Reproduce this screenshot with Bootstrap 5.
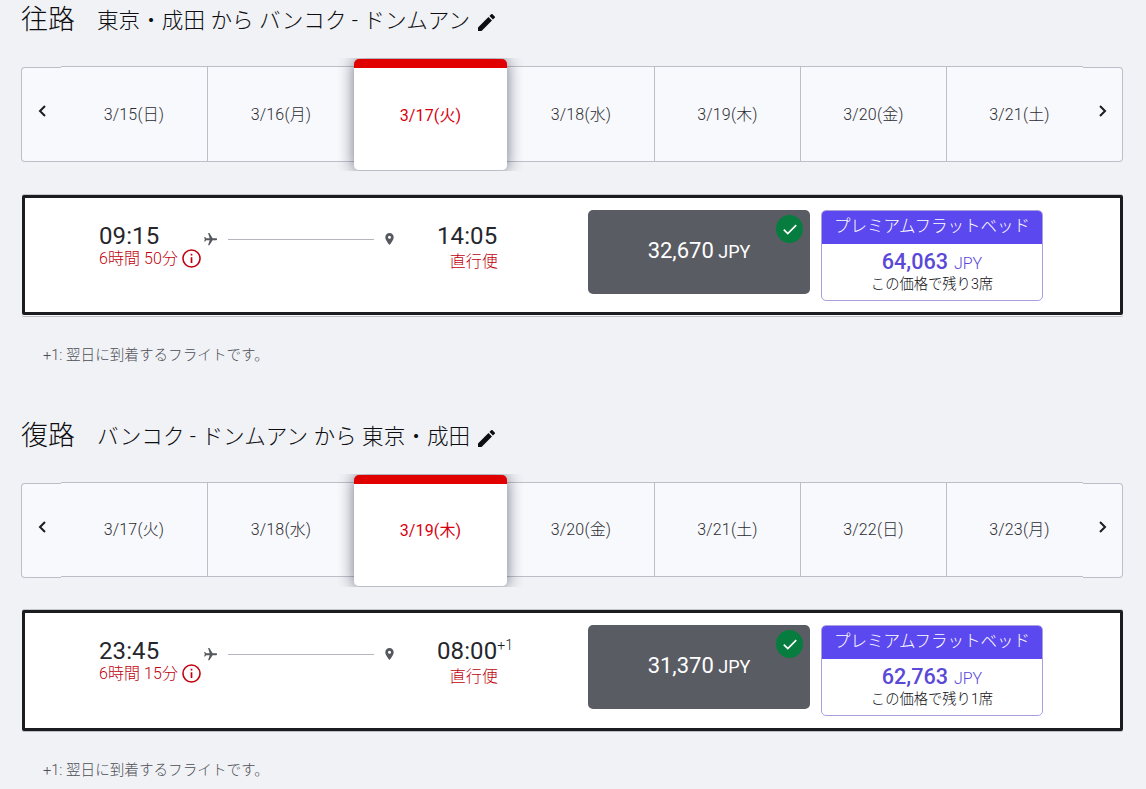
<!DOCTYPE html>
<html lang="ja">

<head>
    <meta charset="UTF-8" />
    <meta name="viewport" content="width=device-width, initial-scale=1.0" />
    <title>フライト選択</title>
    <link href="https://cdn.jsdelivr.net/npm/bootstrap@5.3.3/dist/css/bootstrap.min.css" rel="stylesheet">
    <style>
        body {
            background: #f1f2f6;
            color: #1b1c20;
            font-family: Roboto, "Noto Sans CJK JP", sans-serif;
            font-size: 16px;
            font-weight: 300;
        }

        svg { display: block; flex: none; }

        .journey { padding: 0 23px 0 21px; }
        .outbound { height: 415px; }
        .inbound { height: 374px; padding-top: 1px; }

        .journey-title { height: 40px; white-space: nowrap; color: #0d0e11; }
        .journey-title h2 { font-size: 27px; font-weight: 300; line-height: 40px; width: 76px; }
        .journey-title h3 { font-size: 21.6px; font-weight: 300; line-height: 42px; letter-spacing: .03px; }
        .journey-title svg { margin-top: 4px; }

        .date-strip { height: 112px; margin-top: 19px; color: #2b2c31; letter-spacing: .15px; }
        .date-arrow, .date-cell { background: #f8f9fd; border: 0 solid #bdbfc8; border-width: 1px 0; }
        .date-arrow { width: 40px; height: 95px; margin-bottom: 1px; padding-bottom: 8px; color: #1b1c20; }
        .date-arrow.prev { border-left-width: 1px; border-radius: 4px 0 0 4px; }
        .date-arrow.next { border-right-width: 1px; border-radius: 0 4px 4px 0; }
        .date-cell { width: 146px; height: 96px; margin-bottom: 2px; padding-top: 1px; }
        .date-cell.divided { border-right-width: 1px; }
        .date-cell.first { width: 147px; }
        .date-cell.last { width: 136px; padding-left: 9px; }
        .date-cell.wide { width: 148px; padding-left: 1px; }
        .date-cell.chosen {
            width: 153px;
            height: 112px;
            margin-bottom: 0;
            background: #fff;
            border: 0;
            border-top: 9px solid #e10000;
            border-bottom: 1px solid #bdbfc8;
            border-radius: 5px;
            color: #d8000f;
            font-weight: 400;
            padding: 0 0 7px;
            box-shadow: 0 0 16px rgba(50, 55, 70, .7);
            clip-path: inset(-1px -16px 0 -16px);
            z-index: 1;
        }

        .flight { height: 120px; margin: 24px 0 0 1px; border: 3px solid #1b1c20; border-radius: 2px; background: #fff; box-shadow: 0 -1px 0 #c6c7cd, 0 1px 0 #f8f8fa, 0 2px 0 #bdbfc8; }
        .clock { font-size: 24px; line-height: 28px; letter-spacing: .1px; }
        .clock .hour { font-weight: 400; color: #26272c; }
        .clock sup { font-size: 14px; top: -.64em; }
        .departs { width: 105px; margin-left: 74px; padding-top: 24px; }
        .duration { color: #c0000c; line-height: 17px; margin-top: -1px; white-space: nowrap; letter-spacing: .08px; }
        .route { height: 20px; margin-top: 31px; width: 190px; color: #55585f; }
        .route hr { width: 146px; margin: 0; border-color: #b4b6bd; opacity: 1; }
        .arrives { width: 100px; margin-left: 43px; padding-top: 24px; }
        .direct { width: 61px; line-height: 24px; color: #c0000c; letter-spacing: .1px; }

        .fare { width: 222px; margin-top: 12px; border-radius: 5px; white-space: nowrap; }
        .fare-basic { height: 84px; margin-left: 51px; background: #5a5c64; color: #fff; font-weight: 400; font-size: 18px; padding-bottom: 3px; }
        .fare-amount { font-size: 22px; }
        .tick { top: 5px; right: 7px; width: 27px; height: 28px; background: #067d3e; }
        .fare-premium { height: 91px; margin-left: 11px; border: 1px solid #ab9fe0; overflow: hidden; }
        .fare-premium .fare-name { height: 33px; line-height: 31px; font-size: 16.5px; background: #5b48ee; color: #fff; }
        .fare-price { color: #5a48d8; line-height: 24px; padding-top: 6px; }
        .fare-price .fare-amount { font-size: 21.6px; font-weight: 500; margin-right: 2px; }
        .fare-left { font-size: 14.3px; line-height: 17px; color: #0d0e11; }

        .footnote { margin: 29px 0 0 22px; font-size: 14.6px; line-height: 22px; color: #4c4e55; }

        .inbound .date-cell:not(.chosen) { height: 95px; margin-bottom: 3px; padding-top: 0; }
        .inbound .date-cell.chosen { padding-bottom: 9px; }
        .inbound .flight { height: 121px; margin-top: 23px; box-shadow: 0 -1px 0 #c6c7cd, 0 1px 0 #bdbfc8; }
        .inbound .footnote { margin-top: 28px; }
    </style>
</head>

<body>

    <!-- アイコン -->
    <svg class="d-none">
        <symbol id="pencil" viewBox="3 3 18 18">
            <path fill="currentColor" d="M3 17.25V21h3.75L17.8 9.94l-3.75-3.75L3 17.25zM20.7 7.04a1 1 0 0 0 0-1.41l-2.34-2.34a1 1 0 0 0-1.41 0l-1.83 1.83 3.75 3.75 1.83-1.83z" />
        </symbol>
        <symbol id="left" viewBox="0 0 8 12">
            <path fill="none" stroke="currentColor" stroke-width="2" d="M7 1L2 6l5 5" />
        </symbol>
        <symbol id="right" viewBox="0 0 8 12">
            <path fill="none" stroke="currentColor" stroke-width="2" d="M1 1l5 5-5 5" />
        </symbol>
        <symbol id="info" viewBox="0 0 18 18">
            <circle cx="9" cy="9" r="8.1" fill="none" stroke="currentColor" stroke-width="1.5" />
            <path fill="currentColor" d="M8.2 4.6h1.6v1.6H8.2zM8.2 7.8h1.6v5.4H8.2z" />
        </symbol>
        <symbol id="plane" viewBox="2 2 19.5 20">
            <path fill="currentColor" transform="rotate(90 12 12)" d="M21 16v-2l-8-5V3.500c0-.83-.67-1.500-1.500-1.500S10 2.670 10 3.500V9l-8 5v2l8-2.500V19l-2 1.500V22l3.500-1 3.500 1v-1.500L13 19v-5.500l8 2.500z" />
        </symbol>
        <symbol id="pin" viewBox="5 2 14 20">
            <path fill="currentColor" d="M12 2C8.130 2 5 5.130 5 9c0 5.250 7 13 7 13s7-7.750 7-13c0-3.870-3.130-7-7-7zm0 9.500a2.500 2.500 0 1 1 0-5 2.500 2.500 0 0 1 0 5z" />
        </symbol>
        <symbol id="check" viewBox="0 0 14 11">
            <path fill="none" stroke="currentColor" stroke-width="1.7" d="M.8 5.600l4 4L13.200 1.200" />
        </symbol>
    </svg>

    <!-- 往路 -->
    <section class="journey outbound">
        <div class="journey-title d-flex">
            <h2 class="mb-0">往路</h2>
            <h3 class="mb-0">東京・成田 から バンコク - ドンムアン</h3>
            <svg class="align-self-center ms-2" width="17" height="17"><use href="#pencil" /></svg>
        </div>

        <div class="date-strip d-flex align-items-center">
            <div class="date-arrow prev d-flex align-items-center justify-content-center"><svg width="8" height="12"><use href="#left" /></svg></div>
            <div class="date-cell first divided d-flex align-items-center justify-content-center">3/15(日)</div>
            <div class="date-cell d-flex align-items-center justify-content-center">3/16(月)</div>
            <div class="date-cell chosen d-flex align-items-center justify-content-center">3/17(火)</div>
            <div class="date-cell wide divided d-flex align-items-center justify-content-center">3/18(水)</div>
            <div class="date-cell divided d-flex align-items-center justify-content-center">3/19(木)</div>
            <div class="date-cell divided d-flex align-items-center justify-content-center">3/20(金)</div>
            <div class="date-cell last d-flex align-items-center justify-content-center">3/21(土)</div>
            <div class="date-arrow next d-flex align-items-center justify-content-center"><svg width="8" height="12"><use href="#right" /></svg></div>
        </div>

        <div class="flight d-flex align-items-start">
            <div class="departs">
                <div class="clock"><span class="hour">09:15</span></div>
                <div class="duration d-flex align-items-center gap-1">6時間 50分<svg width="19" height="19"><use href="#info" /></svg></div>
            </div>
            <div class="route d-flex align-items-center justify-content-between">
                <svg width="13" height="13"><use href="#plane" /></svg>
                <hr>
                <svg width="9" height="12"><use href="#pin" /></svg>
            </div>
            <div class="arrives">
                <div class="clock"><span class="hour">14:05</span></div>
                <div class="direct text-end">直行便</div>
            </div>
            <div class="fare fare-basic position-relative d-flex align-items-center justify-content-center">
                <div><span class="fare-amount">32,670</span> JPY</div>
                <span class="tick position-absolute rounded-circle d-flex align-items-center justify-content-center"><svg width="14" height="11"><use href="#check" /></svg></span>
            </div>
            <div class="fare fare-premium text-center">
                <div class="fare-name">プレミアムフラットベッド</div>
                <div class="fare-price"><span class="fare-amount">64,063</span> JPY</div>
                <div class="fare-left">この価格で残り3席</div>
            </div>
        </div>

        <p class="footnote mb-0">+1: 翌日に到着するフライトです。</p>
    </section>

    <!-- 復路 -->
    <section class="journey inbound">
        <div class="journey-title d-flex">
            <h2 class="mb-0">復路</h2>
            <h3 class="mb-0">バンコク - ドンムアン から 東京・成田</h3>
            <svg class="align-self-center ms-2" width="17" height="17"><use href="#pencil" /></svg>
        </div>

        <div class="date-strip d-flex align-items-center">
            <div class="date-arrow prev d-flex align-items-center justify-content-center"><svg width="8" height="12"><use href="#left" /></svg></div>
            <div class="date-cell first divided d-flex align-items-center justify-content-center">3/17(火)</div>
            <div class="date-cell d-flex align-items-center justify-content-center">3/18(水)</div>
            <div class="date-cell chosen d-flex align-items-center justify-content-center">3/19(木)</div>
            <div class="date-cell wide divided d-flex align-items-center justify-content-center">3/20(金)</div>
            <div class="date-cell divided d-flex align-items-center justify-content-center">3/21(土)</div>
            <div class="date-cell divided d-flex align-items-center justify-content-center">3/22(日)</div>
            <div class="date-cell last d-flex align-items-center justify-content-center">3/23(月)</div>
            <div class="date-arrow next d-flex align-items-center justify-content-center"><svg width="8" height="12"><use href="#right" /></svg></div>
        </div>

        <div class="flight d-flex align-items-start">
            <div class="departs">
                <div class="clock"><span class="hour">23:45</span></div>
                <div class="duration d-flex align-items-center gap-1">6時間 15分<svg width="19" height="19"><use href="#info" /></svg></div>
            </div>
            <div class="route d-flex align-items-center justify-content-between">
                <svg width="13" height="13"><use href="#plane" /></svg>
                <hr>
                <svg width="9" height="12"><use href="#pin" /></svg>
            </div>
            <div class="arrives">
                <div class="clock"><span class="hour">08:00</span><sup>+1</sup></div>
                <div class="direct text-end">直行便</div>
            </div>
            <div class="fare fare-basic position-relative d-flex align-items-center justify-content-center">
                <div><span class="fare-amount">31,370</span> JPY</div>
                <span class="tick position-absolute rounded-circle d-flex align-items-center justify-content-center"><svg width="14" height="11"><use href="#check" /></svg></span>
            </div>
            <div class="fare fare-premium text-center">
                <div class="fare-name">プレミアムフラットベッド</div>
                <div class="fare-price"><span class="fare-amount">62,763</span> JPY</div>
                <div class="fare-left">この価格で残り1席</div>
            </div>
        </div>

        <p class="footnote mb-0">+1: 翌日に到着するフライトです。</p>
    </section>

    <script src="https://cdn.jsdelivr.net/npm/bootstrap@5.3.3/dist/js/bootstrap.bundle.min.js"></script>
</body>

</html>
